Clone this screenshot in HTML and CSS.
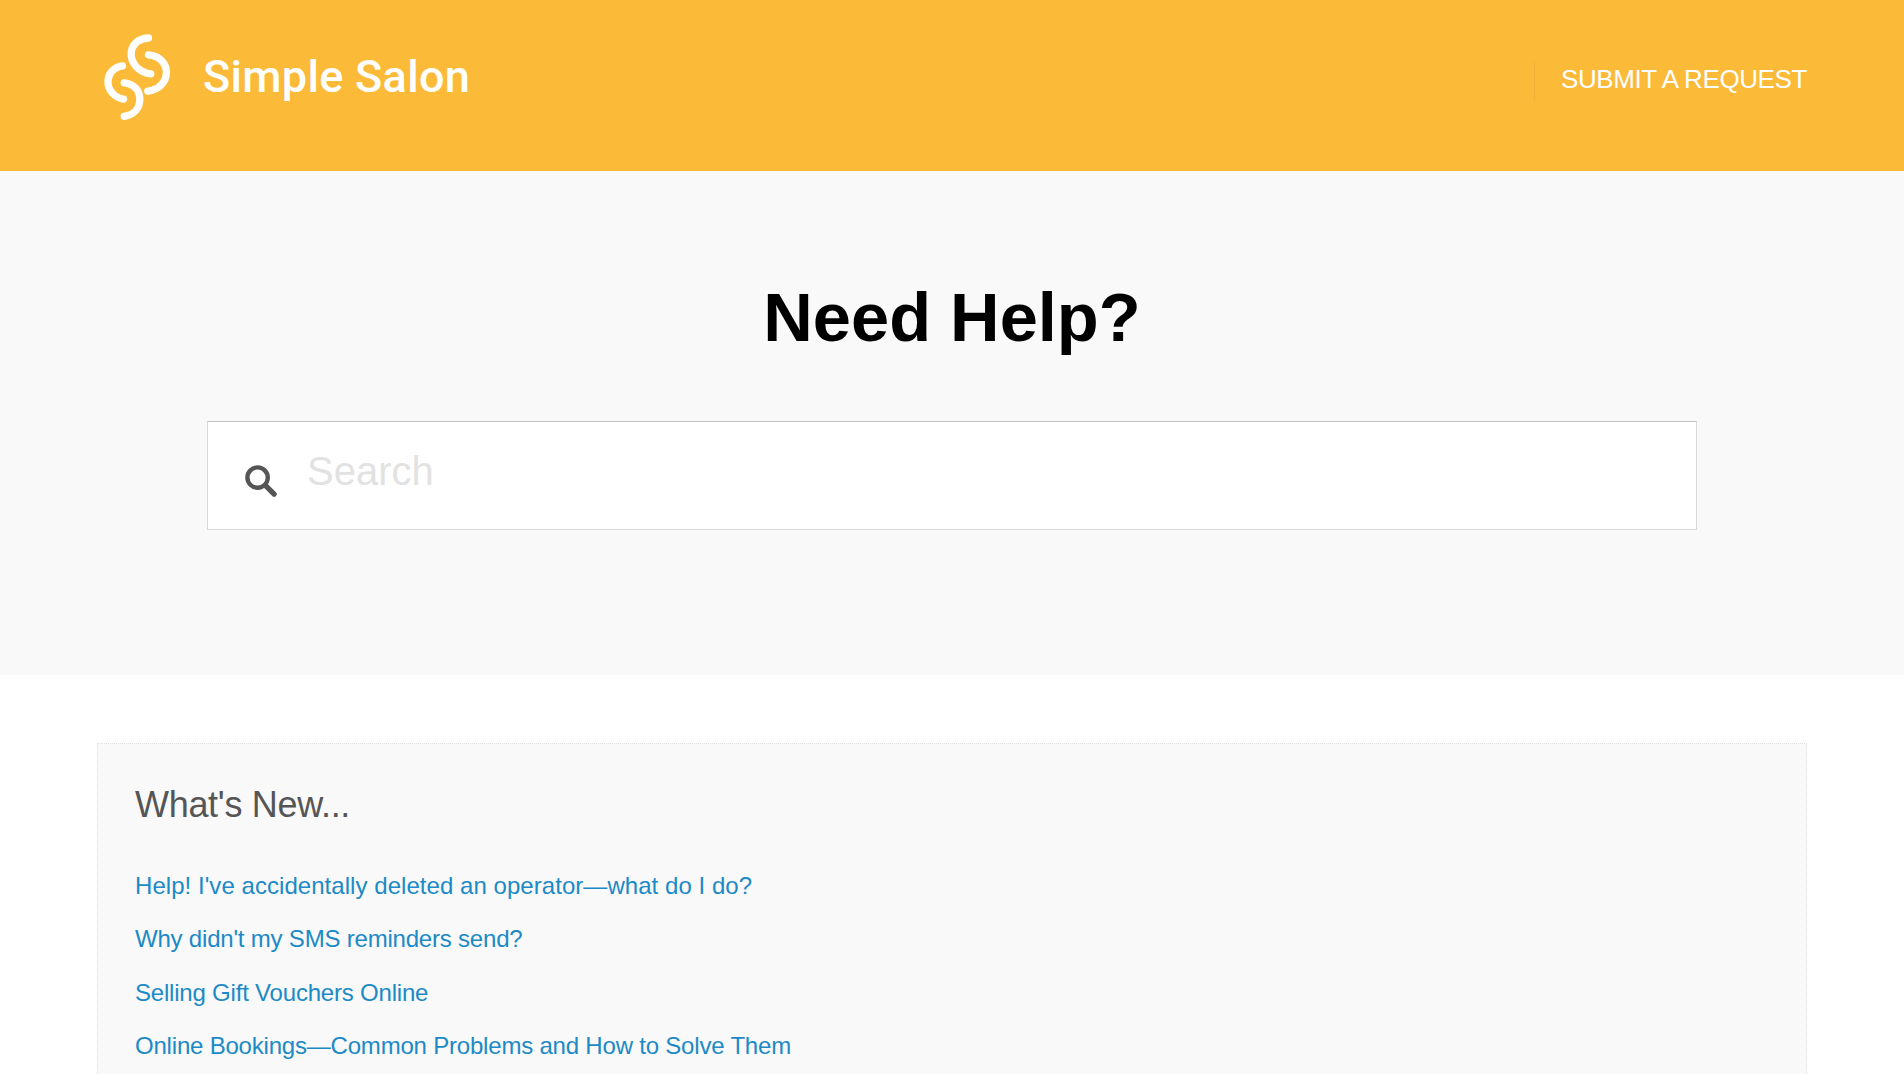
FILE: index.html
```html
<!DOCTYPE html>
<html lang="en">
<head>
<meta charset="utf-8">
<title>Simple Salon Help</title>
<link rel="stylesheet" href="styles.css">
</head>
<body>
<header class="site-header">
  <a class="brand" href="#">
    <svg class="brand-mark" viewBox="60 70 220 260" fill="none" stroke="#fff" stroke-width="22" stroke-linecap="round">
      <path d="M206 84C172 86 152 108 154 136C156 164 180 188 213 192"/>
      <path d="M206 135C240 138 260 160 260 188C260 218 236 240 204 244"/>
      <path d="M128 168C100 172 84 192 84 216C84 242 104 264 131 268"/>
      <path d="M133 219C162 222 180 242 180 268C180 296 162 316 133 320"/>
    </svg>
    <span class="brand-name">Simple Salon</span>
  </a>
  <nav class="header-nav"><a href="#">SUBMIT A REQUEST</a></nav>
</header>
<section class="hero">
  <h1>Need Help?</h1>
  <form class="search">
    <svg class="search-icon" viewBox="0 0 34 34" fill="none" stroke="#555" stroke-linecap="round">
      <circle cx="14" cy="14" r="10.5" stroke-width="4.5"/>
      <path d="M22.5 22.5L31 31" stroke-width="5.5"/>
    </svg>
    <input type="search" placeholder="Search" aria-label="Search">
  </form>
</section>
<main class="content">
  <section class="card">
    <h2>What's New...</h2>
    <ul class="links">
      <li><a href="#">Help! I've accidentally deleted an operator—what do I do?</a></li>
      <li><a href="#">Why didn't my SMS reminders send?</a></li>
      <li><a href="#">Selling Gift Vouchers Online</a></li>
      <li><a href="#">Online Bookings—Common Problems and How to Solve Them</a></li>
    </ul>
  </section>
</main>
</body>
</html>
```
FILE: styles.css
```css
* { box-sizing: border-box; }
html, body { margin: 0; height: 1074px; overflow: hidden; }
body { font-family: "Liberation Sans", Arial, sans-serif; background: #fff; color: #555; }
a { text-decoration: none; color: inherit; }

.site-header {
  height: 171px;
  background: #fcba39;
  display: flex;
  align-items: flex-start;
  justify-content: space-between;
  padding: 33px 97px 0 100px;
}
.brand { display: flex; align-items: flex-start; gap: 30px; color: #fff; }
.brand-mark { width: 73px; height: 87px; flex: none; }
.brand-name {
  font-family: Roboto, sans-serif;
  font-weight: 500;
  font-size: 45px;
  line-height: 87px;
  letter-spacing: 0.3px;
}
.header-nav {
  margin-top: 29px;
  padding-left: 26px;
  height: 39px;
  line-height: 34px;
  border-left: 1px solid #f0b136;
  color: #fff;
  font-size: 26px;
  letter-spacing: -0.4px;
}

.hero {
  height: 504px;
  background: #f9f9f9;
  padding-top: 108px;
  display: flex;
  flex-direction: column;
  align-items: center;
}
.hero h1 {
  margin: 0;
  color: #000;
  font-size: 68.6px;
  line-height: 78px;
  font-weight: 700;
}
.search {
  width: 1490px;
  height: 109px;
  margin-top: 64px;
  background: #fff;
  border: 1px solid #d9d9d9;
  border-top-color: #c0c0c0;
  display: flex;
  align-items: flex-start;
  padding: 42px 0 0 36px;
  gap: 30px;
}
.search-icon { width: 33px; height: 33px; flex: none; }
.search input {
  flex: 1;
  border: 0;
  outline: 0;
  padding: 0;
  margin-top: -19px;
  height: 52px;
  background: transparent;
  font: 40px "Liberation Sans", Arial, sans-serif;
  color: #555;
}
.search input::placeholder { color: #e2e2e2; opacity: 1; }

.content { padding: 68px 97px 0; }
.card {
  background: #f9f9f9;
  border: 1px dotted #e0e0e0;
  padding: 37px 37px 40px;
}
.card h2 {
  margin: 0;
  font-size: 36px;
  line-height: 48px;
  font-weight: 400;
  color: #555;
  letter-spacing: -0.3px;
}
.links { list-style: none; margin: 37px 0 0; padding: 0; display: flex; flex-direction: column; }
.links li { height: 53.4px; line-height: 40px; font-size: 24px; color: #1c8ac6; letter-spacing: -0.2px; }
.links li:first-child { letter-spacing: 0.05px; }
```
